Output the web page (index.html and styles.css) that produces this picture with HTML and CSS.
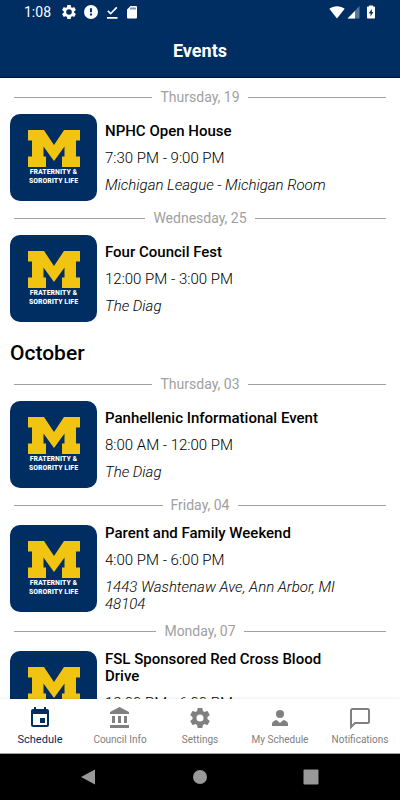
FILE: index.html
```html
<!DOCTYPE html>
<html lang="en">

<head>
  <meta charset="UTF-8" />
  <meta name="viewport" content="width=device-width, initial-scale=1.0" />
  <title>Events</title>
  <link rel="stylesheet" href="styles.css">
</head>

<body>
  <!-- shared block M -->
  <svg class="defs" aria-hidden="true">
    <symbol id="block-m" viewBox="0 0 52 37">
      <path d="M0 0H16L26 15L36 0H52V10.500H48V26.500H52V37H34V26.500H36.500V16.500L26 31L15.500 16.500V26.500H18V37H0V26.500H4V10.500H0Z" />
    </symbol>
  </svg>

  <header>
    <div class="status-bar">
      <span class="clock">1:08</span>
      <div class="status-icons">
        <svg width="14" height="14" viewBox="2 2 20 20"><path d="M19.43 12.98c.04-.32.07-.64.07-.98s-.03-.66-.07-.98l2.11-1.65c.19-.15.24-.42.12-.64l-2-3.46c-.12-.22-.39-.3-.61-.22l-2.49 1c-.52-.4-1.08-.73-1.69-.98l-.38-2.65C14.46 2.18 14.25 2 14 2h-4c-.25 0-.46.18-.49.42l-.38 2.65c-.61.25-1.17.59-1.69.98l-2.49-1c-.23-.09-.49 0-.61.22l-2 3.46c-.13.22-.07.49.12.64l2.11 1.65c-.04.32-.07.65-.07.98s.03.66.07.98l-2.11 1.65c-.19.15-.24.42-.12.64l2 3.46c.12.22.39.3.61.22l2.49-1c.52.4 1.08.73 1.69.98l.38 2.65c.03.24.24.42.49.42h4c.25 0 .46-.18.49-.42l.38-2.65c.61-.25 1.17-.59 1.69-.98l2.49 1c.23.09.49 0 .61-.22l2-3.46c.12-.22.07-.49-.12-.64l-2.11-1.65zM12 16a4 4 0 1 1 0-8 4 4 0 0 1 0 8z" /></svg>
        <svg width="14" height="14" viewBox="2 2 20 20"><path d="M12 2a10 10 0 1 0 0 20 10 10 0 0 0 0-20zm1.500 15h-3v-3h3v3zm0-4.500h-3V6.500h3v6z" /></svg>
        <svg width="12" height="14" viewBox="0 0 12 14"><path d="M1 12h10.500v1.700H1zM4.600 9.800L1.300 6.500l1.200-1.200 2.100 2.100L10.200 1.700l1.200 1.200z" /></svg>
        <svg width="12" height="14" viewBox="0 0 12 14"><path d="M4.500 1H10a1 1 0 0 1 1 1v10.500a1 1 0 0 1-1 1H2a1 1 0 0 1-1-1v-8zM4.500 2.500v2h1v-2zm2 0v2h1v-2zm2 0v2h1v-2z" fill-rule="evenodd" /></svg>
      </div>
      <div class="signal-icons">
        <svg width="16" height="14" viewBox="0 0 16 14"><path d="M8 13.500L.3 3.700C4.500.3 11.500.3 15.700 3.700z" /></svg>
        <svg width="13" height="14" viewBox="0 0 13 14"><path d="M12.500 1v12.500H.5z" opacity=".35" /><path d="M8 6v7.500H.5z" /></svg>
        <svg width="10" height="14" viewBox="0 0 10 14"><path d="M3 1.500V.5h4v1h1.200a.8.8 0 0 1 .8.8v10.400a.8.800 0 0 1-.8.8H1.800a.8.8 0 0 1-.8-.8V2.300a.8.8 0 0 1 .8-.8zM5.800 4L2.800 8.300h1.700V11.500L7.300 7H5.800z" fill-rule="evenodd" /></svg>
      </div>
    </div>
    <h1>Events</h1>
  </header>

  <main class="schedule">
    <h3 class="day">Thursday, 19</h3>
    <article class="event">
      <div class="logo">
        <svg width="52" height="37"><use href="#block-m" /></svg>
        <span>FRATERNITY &amp;<br>SORORITY LIFE</span>
      </div>
      <div class="details">
        <h4>NPHC Open House</h4>
        <p>7:30 PM - 9:00 PM</p>
        <p class="place">Michigan League - Michigan Room</p>
      </div>
    </article>

    <h3 class="day">Wednesday, 25</h3>
    <article class="event">
      <div class="logo">
        <svg width="52" height="37"><use href="#block-m" /></svg>
        <span>FRATERNITY &amp;<br>SORORITY LIFE</span>
      </div>
      <div class="details">
        <h4>Four Council Fest</h4>
        <p>12:00 PM - 3:00 PM</p>
        <p class="place">The Diag</p>
      </div>
    </article>

    <h2>October</h2>

    <h3 class="day">Thursday, 03</h3>
    <article class="event">
      <div class="logo">
        <svg width="52" height="37"><use href="#block-m" /></svg>
        <span>FRATERNITY &amp;<br>SORORITY LIFE</span>
      </div>
      <div class="details">
        <h4>Panhellenic Informational Event</h4>
        <p>8:00 AM - 12:00 PM</p>
        <p class="place">The Diag</p>
      </div>
    </article>

    <h3 class="day">Friday, 04</h3>
    <article class="event">
      <div class="logo">
        <svg width="52" height="37"><use href="#block-m" /></svg>
        <span>FRATERNITY &amp;<br>SORORITY LIFE</span>
      </div>
      <div class="details">
        <h4>Parent and Family Weekend</h4>
        <p>4:00 PM - 6:00 PM</p>
        <p class="place">1443 Washtenaw Ave, Ann Arbor, MI 48104</p>
      </div>
    </article>

    <h3 class="day">Monday, 07</h3>
    <article class="event">
      <div class="logo">
        <svg width="52" height="37"><use href="#block-m" /></svg>
        <span>FRATERNITY &amp;<br>SORORITY LIFE</span>
      </div>
      <div class="details">
        <h4>FSL Sponsored Red Cross Blood Drive</h4>
        <p>12:00 PM - 6:00 PM</p>
        <p class="place">The Diag</p>
      </div>
    </article>
  </main>

  <nav class="tabs">
    <a href="#schedule" class="active">
      <svg width="24" height="24" viewBox="0 0 24 24"><path d="M17 12h-5v5h5v-5zM16 1v2H8V1H6v2H5c-1.110 0-1.990.9-1.990 2L3 19a2 2 0 0 0 2 2h14c1.100 0 2-.9 2-2V5c0-1.100-.9-2-2-2h-1V1h-2zm3 18H5V8h14v11z" /></svg>
      Schedule
    </a>
    <a href="#council">
      <svg width="24" height="24" viewBox="0 0 24 24"><path d="M4 10v7h3v-7H4zm6 0v7h3v-7h-3zM2 22h19v-3H2v3zm14-12v7h3v-7h-3zm-4.500-9L2 6v2h19V6l-9.500-5z" /></svg>
      Council Info
    </a>
    <a href="#settings">
      <svg width="24" height="24" viewBox="0 0 24 24"><path d="M19.430 12.980c.04-.32.07-.64.07-.98s-.03-.66-.07-.98l2.110-1.650c.19-.15.24-.42.12-.64l-2-3.460c-.12-.22-.39-.3-.61-.22l-2.490 1c-.52-.4-1.080-.73-1.690-.98l-.38-2.650C14.460 2.180 14.250 2 14 2h-4c-.25 0-.46.18-.49.42l-.38 2.650c-.61.25-1.170.59-1.690.98l-2.490-1c-.23-.09-.49 0-.61.22l-2 3.460c-.13.22-.07.49.12.64l2.110 1.650c-.04.32-.07.65-.07.98s.03.66.07.98l-2.110 1.650c-.19.15-.24.42-.12.64l2 3.460c.12.22.39.3.61.22l2.490-1c.52.4 1.080.73 1.690.98l.38 2.650c.03.24.24.42.49.42h4c.25 0 .46-.18.49-.42l.38-2.650c.61-.25 1.170-.59 1.690-.98l2.490 1c.23.09.49 0 .61-.22l2-3.460c.12-.22.07-.49-.12-.64l-2.110-1.650zM12 15.500a3.500 3.500 0 1 1 0-7 3.500 3.500 0 0 1 0 7z" /></svg>
      Settings
    </a>
    <a href="#my-schedule">
      <svg width="24" height="24" viewBox="0 0 24 24"><circle cx="12" cy="8" r="4" /><path d="M4 20v-2c0-2 2-3.500 4.500-4L12 17l3.500-3c2.500.5 4.500 2 4.500 4v2z" /></svg>
      My Schedule
    </a>
    <a href="#notifications">
      <svg width="24" height="24" viewBox="0 0 24 24"><path d="M4.500 3h15A1.500 1.500 0 0 1 21 4.500v11a1.500 1.500 0 0 1-1.500 1.500H7l-4 4V4.500A1.500 1.500 0 0 1 4.500 3z" fill="none" stroke="currentColor" stroke-width="2" /></svg>
      Notifications
    </a>
  </nav>

  <footer class="system-bar">
    <button aria-label="Back"><svg width="16" height="16" viewBox="0 0 16 16"><path d="M0 8L14 .5v15z" /></svg></button>
    <button aria-label="Home"><svg width="16" height="16" viewBox="0 0 16 16"><circle cx="8" cy="8" r="7" /></svg></button>
    <button aria-label="Recent apps"><svg width="16" height="16" viewBox="0 0 16 16"><rect x=".5" y=".5" width="15" height="15" rx="1" /></svg></button>
  </footer>
</body>

</html>
```

FILE: styles.css
```css
:root {
  --navy: #002d62;
  --maize: #f1c411;
  --gray: #808080;
  --light-gray: #a0a0a0;
}

* {
  box-sizing: border-box;
}

body {
  margin: 0;
  height: 100vh;
  display: flex;
  flex-direction: column;
  font-family: Roboto, sans-serif;
  background-color: #fff;
  color: #000;
}

h1,
h2,
h3,
h4,
p {
  margin: 0;
}

svg {
  display: block;
  fill: currentColor;
}

.defs {
  display: none;
}

header {
  background-color: var(--navy);
  color: #fff;
  border-bottom: 1px solid #001538;
}

.status-bar {
  display: flex;
  align-items: center;
  height: 24px;
  padding: 0 24px;
}

.clock {
  font-size: 14px;
}

.status-icons {
  display: flex;
  gap: 8px;
  margin-left: 11px;
}

.signal-icons {
  display: flex;
  gap: 2px;
  margin-left: auto;
}

.signal-icons svg:last-child {
  margin-left: 4px;
}

h1 {
  font-size: 18px;
  font-weight: 700;
  line-height: 53px;
  text-align: center;
}

.schedule {
  flex: 1;
  min-height: 0;
  overflow-y: auto;
  scrollbar-width: none;
  padding-top: 10px;
}

h2 {
  padding: 2px 10px 0;
  font-size: 21px;
  font-weight: 500;
  line-height: 43px;
}

.day {
  display: flex;
  align-items: center;
  gap: 8px;
  padding: 0 14px;
  font-size: 14px;
  font-weight: 400;
  line-height: 18px;
  color: var(--light-gray);
}

.day::before,
.day::after {
  content: "";
  flex: 1;
  height: 1px;
  background-color: var(--light-gray);
}

.event {
  display: flex;
  align-items: center;
  gap: 8px;
  padding: 8px 10px;
}

.logo {
  flex: none;
  display: flex;
  flex-direction: column;
  align-items: center;
  width: 87px;
  height: 87px;
  padding-top: 16px;
  border-radius: 10px;
  background-color: var(--navy);
  color: var(--maize);
}

.logo span {
  font-family: "Roboto Condensed", Roboto, sans-serif;
  font-size: 8px;
  font-weight: 700;
  line-height: 9px;
  text-align: center;
  white-space: nowrap;
  color: #fff;
}

.details {
  display: flex;
  flex-direction: column;
  gap: 10px;
  max-width: 240px;
  padding: 3px 0 1px;
  font-size: 15px;
  line-height: 17px;
}

.details h4 {
  font-size: 15px;
  font-weight: 500;
}

.details p {
  font-weight: 300;
}

.place {
  font-style: italic;
}

.tabs {
  display: flex;
  height: 55px;
  border-bottom: 1px solid #a0a0a0;
  box-shadow: 0 0 3px rgba(0, 0, 0, 0.12);
  background-color: #fff;
}

.tabs a {
  flex: 1;
  display: flex;
  flex-direction: column;
  align-items: center;
  gap: 3px;
  padding-top: 7px;
  font-size: 10px;
  line-height: 14px;
  text-decoration: none;
  white-space: nowrap;
  color: var(--gray);
}

.tabs .active {
  font-size: 11px;
  color: var(--navy);
}

.system-bar {
  display: flex;
  justify-content: center;
  gap: 80px;
  height: 46px;
  background-color: #000;
}

.system-bar button {
  width: 31px;
  padding: 0 7px;
  border: none;
  background: none;
  color: #999;
}
```
